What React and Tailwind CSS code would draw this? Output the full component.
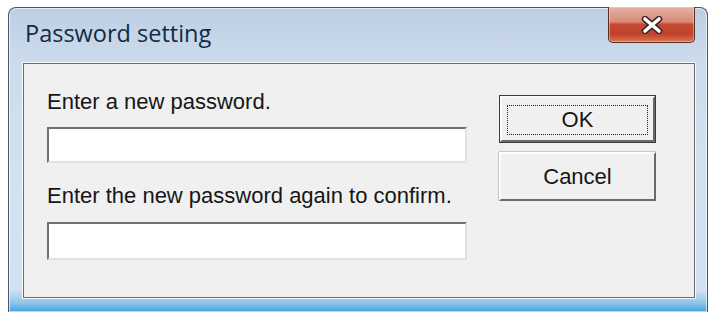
import React from 'react';

// Vista-style "Password setting" dialog
const uiFont = { fontFamily: '"Liberation Sans", Arial, sans-serif' };

const CloseGlyph = () => (
  <svg width="24" height="18" viewBox="0 0 24 18" aria-hidden="true">
    <path d="M5 3 L19 15 M19 3 L5 15" stroke="#3b2622" strokeWidth="6.5" strokeLinecap="round" fill="none" />
    <path d="M5 3 L19 15 M19 3 L5 15" stroke="#ffffff" strokeWidth="3.6" strokeLinecap="round" fill="none" />
  </svg>
);

export default function App() {
  return (
    <div className="h-[312px] w-[709px] overflow-hidden bg-white pl-[8px] pt-[7px]" style={uiFont}>
      <div className="flex h-[305px] w-[700px] flex-col rounded-t-[8px] border border-b-0 border-[#4a5666] bg-[linear-gradient(to_bottom,#bccfe3_0%,#cddcec_18%,#d3e2f1_60%,#cfe1f2_93%,#8fc4ea_97%,#3ea4de_100%)] shadow-[inset_0_0_0_1px_rgba(255,255,255,0.6)]">
        {/* Title bar */}
        <div className="flex h-[55px] items-start justify-between">
          <span
            className="mt-[10px] pl-[16px] text-[23.5px] leading-[30px] text-[#142a44]"
            style={{ fontFamily: '"Open Sans", "Noto Sans", sans-serif' }}
          >
            Password setting
          </span>
          <button
            aria-label="Close"
            className="mr-[12px] -mt-[1px] flex h-[36px] w-[87px] items-center justify-center rounded-b-[5px] border border-t-0 border-[#5b2c25] bg-[linear-gradient(to_bottom,#e6b0a3_0%,#d98b79_42%,#c54a32_50%,#c0432c_78%,#dc7650_100%)] shadow-[inset_0_0_0_1px_rgba(255,220,210,0.45)]"
          >
            <CloseGlyph />
          </button>
        </div>

        {/* Client area */}
        <div className="ml-[14px] flex h-[235px] w-[672px] border border-[#6c6c6c] bg-[#f0f0f0] pl-[23px] pt-[26px] shadow-[0_0_0_1px_rgba(255,255,255,0.85)]">
          <div className="flex w-[420px] flex-col text-[22px] leading-[24px] text-[#161616]">
            <label>Enter a new password.</label>
            <input
              type="password"
              className="mt-[13px] block h-[36px] w-[420px] border-2 border-t-[#707070] border-l-[#707070] border-b-[#e2e2e2] border-r-[#e2e2e2] bg-white outline-none"
            />
            <label className="mt-[21px]">Enter the new password again to confirm.</label>
            <input
              type="password"
              className="mt-[14px] block h-[38px] w-[420px] border-2 border-t-[#707070] border-l-[#707070] border-b-[#e2e2e2] border-r-[#e2e2e2] bg-white outline-none"
            />
          </div>

          <div className="ml-[32px] mt-[5px] flex w-[157px] flex-col text-[22px] text-[#161616]">
            {/* default (focused) button */}
            <button className="flex h-[48px] w-[157px] border border-[#3c3c3c] bg-[#f0f0f0] p-0">
              <div className="flex flex-1 border-2 border-t-[#fbfbfb] border-l-[#fbfbfb] border-b-[#6a6a6a] border-r-[#6a6a6a] px-[5px] pt-[7px] pb-[5px]">
                <div className="flex flex-1 items-center justify-center border border-dotted border-[#222] leading-none">
                  OK
                </div>
              </div>
            </button>
            <button className="mt-[9px] flex h-[49px] w-[157px] items-center justify-center border-2 border-t-[#fdfdfd] border-l-[#fdfdfd] border-b-[#6a6a6a] border-r-[#6a6a6a] bg-[#f0f0f0] shadow-[0_-1px_0_0_#c8c8c8,-1px_0_0_0_#c8c8c8]">
              Cancel
            </button>
          </div>
        </div>
      </div>
    </div>
  );
}
